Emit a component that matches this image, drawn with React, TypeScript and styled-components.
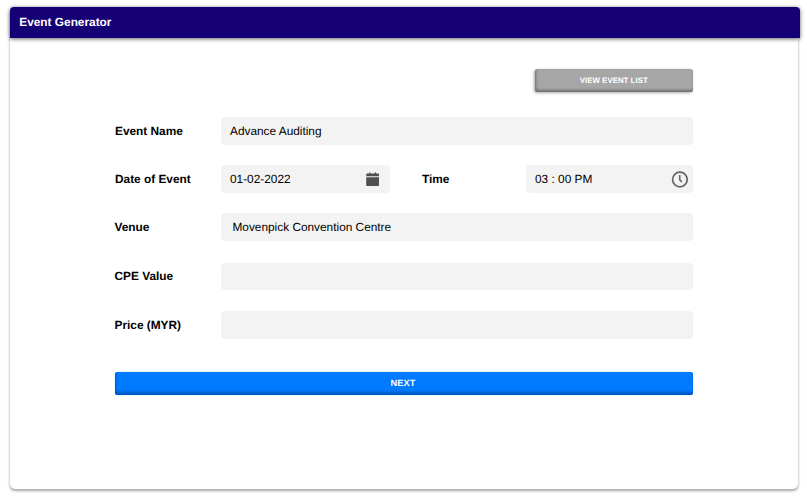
import React from 'react';
import styled, { createGlobalStyle } from 'styled-components';

const GlobalStyle = createGlobalStyle`
  * { box-sizing: border-box; }
  body {
    margin: 0;
    background: #fff;
    color: #000;
    font-family: 'Liberation Sans', Arial, sans-serif;
    font-size: 11.85px;
    text-rendering: geometricPrecision;
  }
`;

const Page = styled.main`
  height: 498px;
  padding: 7px 9px 0 10px;
  overflow: hidden;
`;

const Card = styled.section`
  width: 788px;
  height: 481.5px;
  border-radius: 5px;
  background: #fff;
  box-shadow: 0 2px 3px rgba(0, 0, 0, 0.35), 0 0 1px rgba(0, 0, 0, 0.15);
`;

const Header = styled.header`
  width: 790px;
  height: 31px;
  padding-left: 9.3px;
  border-radius: 4px 4px 0 0;
  background: #160075;
  box-shadow: 0 1px 4px rgba(0, 0, 0, 0.6);
`;

const Title = styled.h1`
  margin: 0;
  color: #fff;
  font-size: 11.85px;
  line-height: 31px;
`;

const Form = styled.form`
  display: flex;
  flex-direction: column;
  width: 578.5px;
  margin-left: 104.5px;
  padding-top: 31px;
`;

const Button = styled.button`
  padding: 0;
  border: 0;
  color: #fff;
  font-family: inherit;
  font-weight: bold;
  text-rendering: geometricPrecision;
`;

const ListButton = styled(Button)`
  align-self: flex-end;
  width: 157.5px;
  height: 23px;
  margin: 0 0.5px 25px 0;
  border-radius: 2.5px;
  background: #a6a6a6;
  box-shadow: inset 1px -2px 3px rgba(0, 0, 0, 0.35), -1px 1px 3px rgba(0, 0, 0, 0.35);
  font-size: 7.9px;
`;

const NextButton = styled(Button)`
  height: 23.5px;
  margin-top: 12px;
  padding-right: 1.5px;
  border-radius: 2.5px;
  background: #007bff;
  box-shadow: inset 1px -3px 3px rgba(0, 20, 90, 0.35), 0 0 1px #389aff;
  font-size: 9.2px;
  letter-spacing: 0.15px;
`;

const Row = styled.div<{ $inset?: number; $raise?: number }>`
  display: flex;
  height: 27.5px;
  margin-top: ${({ $raise = 0 }) => -$raise}px;
  margin-bottom: ${({ $raise = 0 }) => 21 + $raise}px;
  padding-left: ${({ $inset = 0 }) => $inset}px;
`;

const Label = styled.label<{ $width?: number; $line?: number }>`
  flex: none;
  width: ${({ $width = 106 }) => $width}px;
  font-weight: bold;
  line-height: ${({ $line = 28 }) => $line}px;
`;

const Field = styled.div<{ $width?: number; $indent?: number; $drop?: number }>`
  display: flex;
  align-items: center;
  justify-content: space-between;
  width: ${({ $width = 472 }) => $width}px;
  padding: ${({ $drop = 0 }) => $drop}px 5px 0 ${({ $indent = 9 }) => $indent}px;
  border-radius: 4px;
  background: #f3f3f3;
  line-height: 27px;
`;

const TimeLabel = styled(Label)`
  margin-left: 32px;
`;

const CalendarIcon = () => (
  <svg width="14" height="15" viewBox="0 0 14 15" fill="#505050">
    <path d="M.2 2.2Q.2 1.5 1 1.5H3V.4h1.4v1.1h4.2V.4H10v1.1h2.2q.8 0 .8.7v2H.2zM.2 5.2H13v8q0 .8-.8.8H1q-.8 0-.8-.8z" />
  </svg>
);

const ClockIcon = () => (
  <svg width="17" height="17" viewBox="0 0 17 17" fill="none" stroke="#666">
    <circle cx="8.9" cy="8.5" r="7.3" strokeWidth="1.7" />
    <path d="M8.7 4v4.6l2.1 2.5" strokeWidth="1.6" />
  </svg>
);

const IconSlot = styled.span<{ $right?: number; $down?: number }>`
  display: flex;
  margin-right: ${({ $right = 0 }) => $right}px;
  padding-top: ${({ $down = 0 }) => $down}px;
`;

export default function App() {
  return (
    <>
      <GlobalStyle />
      <Page>
        <Card>
          <Header>
            <Title>Event Generator</Title>
          </Header>
          <Form>
            <ListButton type="button">VIEW EVENT LIST</ListButton>
            <Row $inset={0.5}>
              <Label>Event Name</Label>
              <Field $width={471.5} $drop={1}>Advance Auditing</Field>
            </Row>
            <Row $inset={0.5} $raise={0.2}>
              <Label $line={28.5}>Date of Event</Label>
              <Field $width={169}>
                01-02-2022
                <IconSlot $right={5}>
                  <CalendarIcon />
                </IconSlot>
              </Field>
              <TimeLabel $width={104} $line={28.5}>Time</TimeLabel>
              <Field $width={167}>
                03 : 00 PM
                <IconSlot $down={1}>
                  <ClockIcon />
                </IconSlot>
              </Field>
            </Row>
            <Row $raise={0.7}>
              <Label $width={106.8} $line={29}>Venue</Label>
              <Field $indent={11.2}>Movenpick Convention Centre</Field>
            </Row>
            <Row>
              <Label $width={106.8} $line={27}>CPE Value</Label>
              <Field />
            </Row>
            <Row>
              <Label $width={106.8}>Price (MYR)</Label>
              <Field />
            </Row>
            <NextButton type="button">NEXT</NextButton>
          </Form>
        </Card>
      </Page>
    </>
  );
}
